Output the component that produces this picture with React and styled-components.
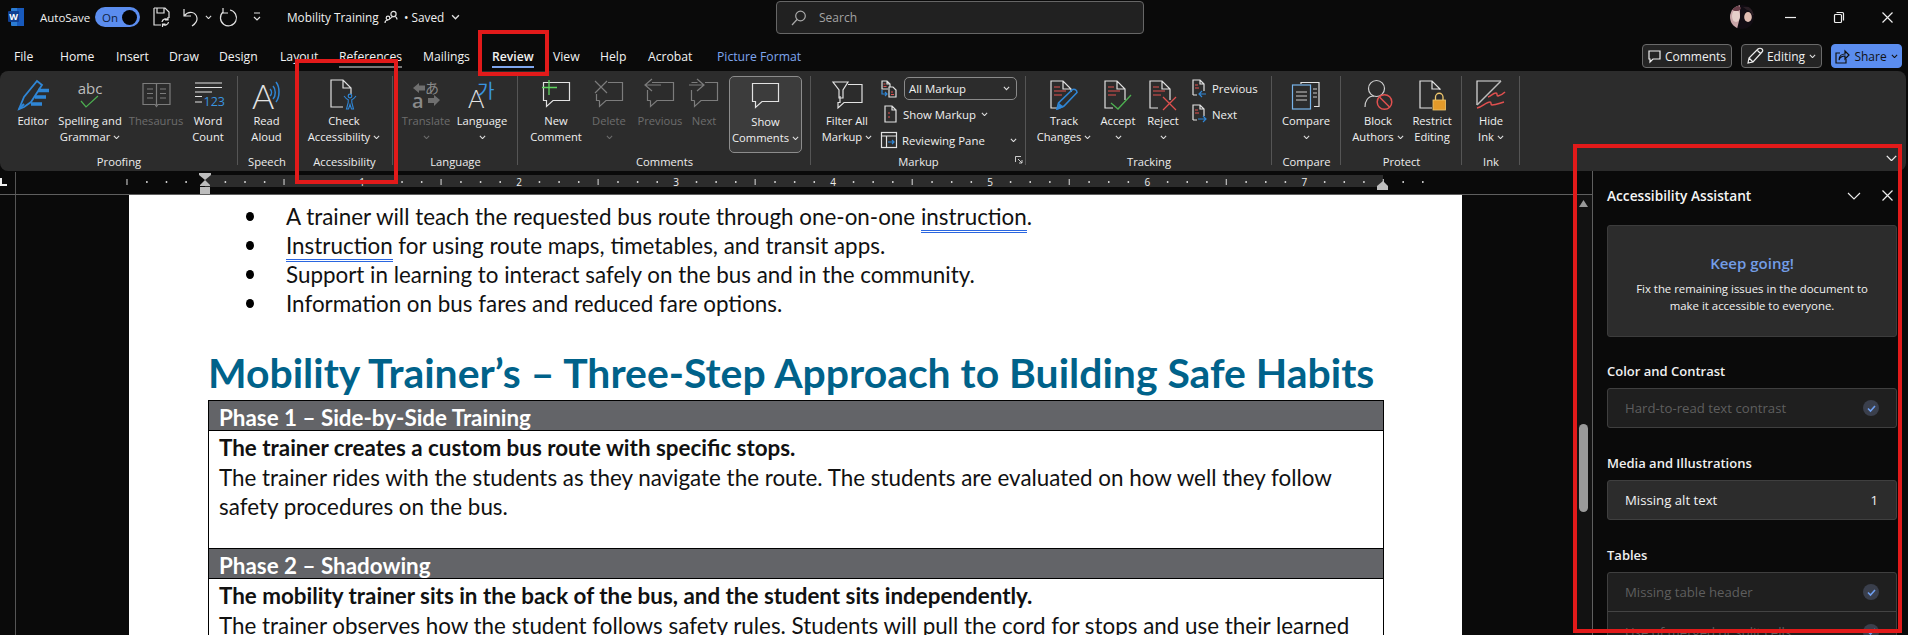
import React from 'react';
import styled, { createGlobalStyle } from 'styled-components';

const Global = createGlobalStyle`
  html, body { margin: 0; padding: 0; background: #0a0a0a; }
  * { box-sizing: border-box; }
`;
const UI = `"Open Sans", "Noto Sans", sans-serif`;
const DOC = `Lato, "Liberation Sans", sans-serif`;

const Screen = styled.div`
  position: relative; width: 1908px; height: 635px; overflow: hidden;
  background: #0a0a0a; color: #f0f0f0; font-family: ${UI};
  display: flex; flex-direction: column;
`;
const Callout = styled.div`
  position: absolute; left: ${p => p.$x}px; top: ${p => p.$y}px; width: ${p => p.$w}px; height: ${p => p.$h}px;
  border: 4px solid #e21a1a; pointer-events: none; z-index: 5;
`;

/* title bar */
const TitleBar = styled.header`
  height: 40px; display: grid; grid-template-columns: 776px 368px 1fr; align-items: start; flex: none;
`;
const QuickAccess = styled.div`display: flex; align-items: center; height: 34px; font-size: 12px; padding-left: 8px;`;
const AutoSave = styled.span`margin-left: 16px; width: 55px; font-size: 11.5px;`;
const Toggle = styled.span`
  width: 45px; height: 20px; border-radius: 10px; background: #5b8def; display: flex; align-items: center;
  justify-content: space-between; padding: 0 3px 0 7px; font-size: 11.5px; color: #10233f;
  &::after { content: ''; width: 15px; height: 15px; border-radius: 50%; background: #050505; }
`;
const DocTitle = styled.span`margin-left: 26px; width: 97px; font-size: 11.8px; white-space: nowrap;`;
const Saved = styled.span`margin-left: 6px; font-size: 11.8px; display: flex; align-items: center; gap: 7px;`;
const Tool = styled.span`display: inline-flex; margin-left: ${p => p.$ml || 0}px;`;
const SearchBox = styled.div`
  height: 33px; margin-top: 1px; background: #212121; border: 1px solid #666; border-radius: 4px;
  display: flex; align-items: center; padding-left: 14px; gap: 13px; color: #a3a3a3; font-size: 12px;
`;
const WindowControls = styled.div`
  display: flex; align-items: center; justify-content: flex-end; height: 34px; padding-right: 15px; gap: 38px;
`;
const AvatarSlot = styled.span`display: flex; margin-right: -7px;`;

/* tabs */
const TabRow = styled.nav`height: 31px; display: flex; align-items: flex-start; padding-left: 14px; flex: none; position: relative;`;
const Tab = styled.span`
  width: ${p => p.$w}px; flex: none; font-size: 12.2px; line-height: 17px; padding-top: 8px; white-space: nowrap;
  color: ${p => p.$accent ? '#7ea6ee' : '#f2f2f2'}; font-weight: ${p => p.$active ? 600 : 400};
`;
const TabText = styled.span`
  display: inline-block; padding-bottom: 1px;
  border-bottom: 2px solid ${p => p.$line || 'transparent'};
`;
const Actions = styled.div`position: absolute; right: 6px; top: 4px; display: flex; gap: 9px;`;
const ActionBtn = styled.div`
  height: 24px; width: ${p => p.$w}px; border: 1px solid ${p => p.$blue ? '#5b8def' : '#6a6a6a'}; border-radius: 4px;
  background: ${p => p.$blue ? '#5b8def' : '#242424'}; color: ${p => p.$blue ? '#111' : '#f0f0f0'};
  display: flex; align-items: center; justify-content: center; gap: 4px; font-size: 12px;
`;

/* ribbon */
const Ribbon = styled.section`
  height: 100px; margin-right: 2px; background: #2c2c2c; border-radius: 8px; display: flex; flex: none; position: relative;
`;
const Group = styled.div`
  width: ${p => p.$w}px; flex: none; display: flex; flex-direction: column; padding-top: 5px; position: relative;
  &::after { content: ''; position: absolute; right: 0; top: 5px; bottom: 6px; width: 1px; background: #555; }
`;
const GroupBody = styled.div`height: 77px; display: flex; padding-left: ${p => p.$pl || 0}px;`;
const GroupLabel = styled.div`
  height: 16px; font-size: 11.2px; line-height: 16px; color: #ececec; text-align: ${p => p.$align || 'center'};
  padding-left: ${p => p.$pl || 0}px; padding-top: 1px; position: relative;
`;
const Launcher = styled.span`position: absolute; right: 3px; top: 3px; display: flex;`;
const Command = styled.div`
  width: ${p => p.$w}px; flex: none; display: flex; flex-direction: column; align-items: center;
  font-size: 11.2px; line-height: 16px; white-space: nowrap; color: ${p => p.$off ? '#6c6c6c' : '#f0f0f0'};
  margin-left: ${p => p.$ml || 0}px;
  ${p => p.$active && `background: #3c3c3c; border: 1px solid #8c8c8c; border-radius: 5px;`}
`;
const IconSlot = styled.div`height: 37px; display: flex; align-items: center; justify-content: center; flex: none;`;
const LabelLine = styled.div`height: 16px; display: flex; align-items: center; gap: 3px;`;
const SmallStack = styled.div`display: flex; flex-direction: column; margin-left: ${p => p.$ml || 0}px; width: ${p => p.$w}px; font-size: 11.4px; color: #f0f0f0;`;
const SmallRow = styled.div`height: ${p => p.$h || 26}px; display: flex; align-items: center; gap: 5px; white-space: nowrap;`;
const Select = styled.div`
  width: 117px; height: 23px; border: 1px solid #8a8a8a; border-radius: 5px; display: flex; align-items: center;
  justify-content: space-between; padding: 0 6px 0 4px; margin-left: 2px;
`;
const Grow = styled.span`flex: 1;`;
const RibbonCollapse = styled.span`position: absolute; right: 9px; bottom: 10px; display: flex;`;

/* work area */
const Work = styled.main`flex: 1; display: flex; min-height: 0;`;
const DocColumn = styled.div`width: 1593px; flex: none; display: flex; flex-direction: column; border-right: 1px solid #5f5f5f;`;
const RulerRow = styled.div`height: 24px; flex: none; border-bottom: 1px solid #5f5f5f;`;
const DocRow = styled.div`flex: 1; display: flex; min-height: 0;`;
const Gutter = styled.div`width: 129px; flex: none; position: relative; &::before { content: ''; position: absolute; left: 15px; top: 0; bottom: 0; width: 1px; background: #555; }`;
const Page = styled.article`
  width: 1333px; flex: none; background: #fff; color: #111; font-family: ${DOC}; font-size: 22.4px; overflow: hidden; padding-top: 7px;
`;
const Bullets = styled.ul`margin: 0; padding: 0 0 0 157px; list-style: none;`;
const Bullet = styled.li`
  height: 29px; line-height: 29px; white-space: nowrap; position: relative;
  &::before { content: ''; position: absolute; left: -40px; top: 10px; width: 8px; height: 9px; border-radius: 50%; background: #000; }
`;
const Squiggle = styled.span`border-bottom: 3px double #2a66e0; line-height: 1;`;
const Heading = styled.h1`
  margin: 32px 0 4px 79px; font-size: 40.9px; line-height: 46px; font-weight: 700; color: #00628a; white-space: nowrap; letter-spacing: 0;
`;
const PhaseTable = styled.div`margin-left: 79px; width: 1176px; border: 1px solid #000; border-bottom: 0;`;
const PhaseHead = styled.div`
  height: 30px; background: #636468; color: #fff; font-weight: 700; line-height: 33px; padding-left: 10px;
  border-bottom: 1px solid #000; white-space: nowrap;
`;
const PhaseBody = styled.div`
  height: ${p => p.$h}px; padding: 2px 10px 0; line-height: 29.5px; border-bottom: 1px solid #000;
`;
const Strong = styled.div`font-weight: 700;`;
const RightMargin = styled.div`width: 113px; flex: none;`;
const ScrollTrack = styled.div`width: 17px; flex: none; background: #121212; display: flex; flex-direction: column; align-items: center; padding-top: 5px;`;
const Thumb = styled.div`width: 9px; height: 88px; margin-top: 217px; border-radius: 5px; background: #9a9a9a;`;

/* pane */
const Pane = styled.aside`flex: 1; padding: 0 11px 0 14px; display: flex; flex-direction: column; min-width: 0;`;
const PaneHead = styled.div`height: 54px; flex: none; display: flex; align-items: center; padding-bottom: 5px;`;
const PaneTitle = styled.div`font-size: 13.7px; font-weight: 600; flex: 1; color: #f6f6f6;`;
const PaneIcons = styled.div`display: flex; align-items: center; gap: 21px; padding-right: 4px;`;
const Card = styled.div`
  height: 112px; background: #2c2c2c; border: 1px solid #3c3c3c; border-radius: 3px; text-align: center; padding-top: 26px; flex: none;
`;
const CardTitle = styled.div`color: #739de6; font-size: 15px; font-weight: 600; line-height: 22px; margin-bottom: 6px;`;
const CardText = styled.div`font-size: 11.4px; line-height: 17px; color: #f2f2f2;`;
const SectionTitle = styled.div`flex: none; font-size: 13px; font-weight: 600; line-height: 18px; margin: ${p => p.$mt || 26}px 0 8px; color: #f0f0f0;`;
const RowList = styled.div`border: 1px solid #3f3f3f; border-radius: 3px; background: ${p => p.$bg || '#2c2c2c'}; flex: none;`;
const PaneRow = styled.div`
  height: 38px; display: flex; align-items: center; justify-content: space-between; padding: 0 17px;
  font-size: 13.2px; color: ${p => p.$off ? '#5e5e5e' : '#f2f2f2'};
  & + & { border-top: 1px solid #444; height: 40px; }
`;
const Check = styled.span`
  width: 16px; height: 16px; border-radius: 50%; background: #3a3f4c; display: flex; align-items: center; justify-content: center;
`;
const Count = styled.span`padding-right: 1px;`;

/* drawings */
const W = '#e2e2e2', R = '#e0504f', B = '#2f86d6', G = '#4caf50', D = '#7c7c7c';
const Svg = ({ w = 30, h = 32, children }) => (
  <svg width={w} height={h} viewBox={`0 0 ${w} ${h}`} fill="none" strokeWidth="1.2" overflow="visible" style={{ flex: 'none', display: 'block' }}>{children}</svg>
);
const Chev = ({ c = '#e0e0e0', w = 7 }) => (
  <svg width={w} height={w * 0.7} viewBox="0 0 7 5" fill="none" style={{ flex: 'none' }}><path d="M.8 1l2.700 2.700L6.200 1" stroke={c} strokeWidth="1.100" /></svg>
);
const BigChev = ({ c = '#eee', w = 14, s = 1.1 }) => (
  <svg width={w} height={w / 2 + 1} viewBox="0 0 14 8" fill="none" style={{ flex: 'none' }}><path d="M1 1l6 6 6-6" stroke={c} strokeWidth={s} /></svg>
);
const DOC_OPEN = 'M21 20V9l-8-8H1v27h8M13 1v8h8';
const RedLines = () => <path d="M4 7h6M4 11h12M4 15h8" stroke={R} strokeWidth="1.200" />;
const BUBBLE = 'M4.500 19.500h-3v-18h26v18H11l-6.500 6z';
const SmallRed = () => <path d="M3 6h3M3 9h4" stroke={R} />;

const WordLogo = () => (
  <svg width="16" height="20" viewBox="0 0 16 20">
    <rect x="3" y="1" width="13" height="18" rx="1" fill="#2b7cd3" /><rect x="9" y="1" width="7" height="18" fill="#185abd" />
    <rect x="0" y="4" width="11" height="11" rx="1" fill="#103f91" />
    <text x="5.500" y="13" textAnchor="middle" fontSize="9" fontWeight="700" fill="#fff" fontFamily="Open Sans">W</text>
  </svg>
);
const SaveIcon = () => (
  <Svg w={17} h={20}>
    <path d="M1 1h11l4 4v6M1 1v17h7M4 1v5h7V1" stroke={W} />
    <path d="M9 15a3.500 3.500 0 0 1 6-2M15.500 15a3.500 3.500 0 0 1-6 2M15 10v3h-3M9.500 20v-3h3" stroke={W} />
  </Svg>
);
const Undo = () => <Svg w={17} h={20}><path d="M2 2v7h7M2 9c5-6 12-4 13 2 .6 4-2 6-5 8" stroke={W} /></Svg>;
const Redo = () => <Svg w={18} h={20}><path d="M11 3a8 8 0 1 1-7 2M4 1v5h5" stroke={W} /></Svg>;
const Custom = () => <Svg w={8} h={10}><path d="M1 1h6M1 5l3 3 3-3" stroke={W} /></Svg>;
const People = () => <Svg w={14} h={14}><circle cx="9.500" cy="4" r="2.600" stroke={W} /><circle cx="4" cy="8" r="1.800" stroke={W} /><path d="M1 13c0-2 1-3 3-3M6 9c1-2 3-2.500 4-2.500 2 0 3 1.500 3 3" stroke={W} /></Svg>;
const Avatar = () => (
  <svg width="24" height="24" viewBox="0 0 24 24" style={{ display: 'block' }}>
    <defs><clipPath id="av"><circle cx="12" cy="12" r="12" /></clipPath></defs>
    <g clipPath="url(#av)">
      <rect width="24" height="24" fill="#120d14" />
      <path d="M0 0h10v12L7 24H0z" fill="#c9a6a8" />
      <ellipse cx="6" cy="11" rx="4" ry="6" fill="#e6cfca" />
      <path d="M2 3c3-3 7-3 9 0-1 3-3 3-5 3S3 6 2 3z" fill="#6a3f4a" />
      <ellipse cx="18" cy="12" rx="3.800" ry="5" fill="#e0bdb2" />
      <path d="M13 2h8l3 8-2 0c-1-3-3-5-5-5z" fill="#2a1e24" />
    </g>
  </svg>
);
const Ruler = () => {
  const ticks = [];
  for (let i = -4; i <= 62; i++) {
    const x = 205 + i * 19.63;
    if (i % 8 === 0 && i > 0) ticks.push(<text key={i} x={x} y="15" fontSize="10" textAnchor="middle" fill="#eee" fontFamily="Open Sans">{i / 8}</text>);
    else if (i % 4 === 0 && i !== 0) ticks.push(<rect key={i} x={x} y="8" width="1" height="6" fill="#ddd" />);
    else if (i !== 0) ticks.push(<rect key={i} x={x} y="10" width="1.500" height="2" fill="#ccc" />);
  }
  return (
    <svg width="1592" height="23" viewBox="0 0 1592 23" style={{ display: 'block' }}>
      <rect x="205" y="4" width="1178" height="12" fill="#2c2c2c" />
      <rect x="15" y="1" width="1" height="22" fill="#555" />
      <path d="M1 7v7h6" stroke="#eee" strokeWidth="2" fill="none" />
      {ticks}
      <path d="M199 2h12v2l-6 5-6-5z" fill="#bdbdbd" /><path d="M205 9l5 5v1h-10v-1z" fill="#bdbdbd" /><rect x="200" y="16" width="10" height="7" fill="#bdbdbd" />
      <path d="M1383 10l5 5v4h-11v-4z" fill="#bdbdbd" />
    </svg>
  );
};

const I = {
  Editor: () => <Svg w={31} h={30}><path d="M1 29l5-12L19 1l5 4-11 17-7 5z" stroke={B} strokeWidth="1.800" /><path d="M1 29l5-5" stroke={B} strokeWidth="2" /><path d="M20 10.500h11M17 17h11M13 24h11" stroke={B} strokeWidth="3.600" /></Svg>,
  Spell: () => <Svg w={24} h={30}><text x="12" y="14" textAnchor="middle" fontSize="15" fill="#bdbdbd" fontFamily="Open Sans">abc</text><path d="M3 21l5 6L20 16" stroke={G} /></Svg>,
  Book: () => <Svg w={29} h={26}><path d="M1 1.500h13l.5 1 .5-1h13v21H16l-1.500 2-1.500-2H1zM14.500 3v20M5 7h6M5 11.500h6M5 16h6M18 7h6M18 11.500h6M18 16h6" stroke={D} /></Svg>,
  Count: () => <Svg w={29} h={25}><path d="M1 1h27M1 5.500h27M1 10h17M1 14.500h7M1 20h7" stroke={W} /><text x="9.500" y="24" fontSize="12.500" fill="#3a95e0" fontFamily="Open Sans">123</text></Svg>,
  Read: () => <Svg w={30} h={30}><text x="0" y="29" fontSize="34" fontWeight="300" fill={W} fontFamily="Lato">A</text><path d="M18 9c2 2 2 5 0 7M21 6c3 3 3 10 0 13M24 2c4 5 4 15 0 20" stroke={B} strokeWidth="1.500" /></Svg>,
  Check: () => <Svg w={28} h={32}>
    <path d="M21 15V9l-8-8H1v27h12M13 1v8h8" stroke={W} />
    <circle cx="20" cy="17" r="1.800" stroke={B} />
    <path d="M14 17c1.500 2 3 3.500 4.200 3.800v2.700l-1.700 6.500h2l1.500-4.500 1.500 4.500h2l-1.700-6.500v-2.700c1.200-.3 2.700-1.800 4.200-3.800" stroke={B} strokeWidth="1.100" />
  </Svg>,
  Translate: () => <Svg w={28} h={29}><text x="13" y="13" fontSize="14" fill="#8a8a8a" fontFamily="Noto Sans CJK JP">あ</text><text x="0" y="28" fontSize="20" fontWeight="600" fill="#8a8a8a" fontFamily="Open Sans">a</text><path d="M1 8l6-5v2.500h6v5H7V13zM28 20l-6 6v-3h-6v-5h6v-3z" fill="#6f6f6f" /></Svg>,
  Lang: () => <Svg w={28} h={29}><text x="0" y="28" fontSize="25" fontWeight="300" fill={W} fontFamily="Lato">A</text><text x="9" y="18" fontSize="19" fill="#3a95e0" fontFamily="Noto Sans CJK KR">가</text></Svg>,
  New: () => <Svg w={29} h={27}><path d={BUBBLE} stroke={W} /><path d="M7 -1v15M0 6.500h15" stroke="#5fd35f" strokeWidth="1.300" /></Svg>,
  Del: () => <Svg w={29} h={27}><path d="M4.500 19.500h-3V13M13 1.500h14.500v18H11l-6.500 6v-6" stroke={D} /><path d="M0 0l12 12M12 0L0 12" stroke={D} /></Svg>,
  Prev: () => <Svg w={29} h={27}><path d="M4.500 19.500h-3V9M6 1.500h21.500v18H11l-6.500 6v-6" stroke={D} /><path d="M6 -2l-7 6 7 6M-1 4h16" stroke={D} /></Svg>,
  Next: () => <Svg w={29} h={27}><path d="M4.500 19.500h-3V9M1.500 1.500h6M15 1.500h12.500v18H11l-6.500 6v-6" stroke={D} /><path d="M7 -2l7 6-7 6M-1 4h15" stroke={D} /></Svg>,
  Show: () => <Svg w={29} h={27}><path d={BUBBLE} stroke={W} /></Svg>,
  Filter: () => <Svg w={31} h={28}><path d="M16 3.500h14v18H12L6 27v-5.500h2V15" stroke={W} /><path d="M1 1h15l-5 8v8H7V9z" stroke={W} /></Svg>,
  Track: () => <Svg w={28} h={30}><path d="M21 12V9l-8-8H1v27h6M13 1v8h8" stroke={W} /><RedLines /><path d="M7 29l1.500-6L22 10c1.500-1.500 5-.5 5 2.500L14 26z" stroke={B} strokeWidth="1.600" /><path d="M7 30l2-7 5 4z" fill={B} /></Svg>,
  Accept: () => <Svg w={28} h={30}><path d={DOC_OPEN} stroke={W} /><RedLines /><path d="M7 23l7 6L27 15" stroke={G} strokeWidth="1.300" /></Svg>,
  Reject: () => <Svg w={28} h={30}><path d={DOC_OPEN} stroke={W} /><RedLines /><path d="M14 17l13 13M27 17L14 30" stroke={R} strokeWidth="1.300" /></Svg>,
  Compare: () => <Svg w={28} h={28}><path d="M9 3V1.500h18v24h-5" stroke={W} /><rect x=".5" y="4" width="18" height="24" stroke="#78b4ea" /><path d="M4 11h11M4 15h11M4 19h11M21 8h4M21 12h4M21 16h4" stroke="#c9c9c9" /></Svg>,
  Block: () => <Svg w={29} h={31}><circle cx="12.500" cy="9.500" r="8" stroke="#cfcfcf" /><path d="M1 28c0-6 3-11 9-11" stroke="#cfcfcf" /><circle cx="20.500" cy="23" r="7.300" stroke={R} strokeWidth="1.500" /><path d="M15.500 18l10 10" stroke={R} strokeWidth="1.500" /></Svg>,
  Restrict: () => <Svg w={27} h={30}><path d="M21 10V9l-8-8H1v27h12M13 1v8h8" stroke={W} /><rect x="14" y="20" width="12.500" height="10" fill="#e39a2a" stroke="#f0c86e" strokeWidth=".8" /><path d="M16.500 20v-3a3.700 3.700 0 0 1 7.500 0v3" stroke="#f0c86e" strokeWidth="1.300" /></Svg>,
  Ink: () => <Svg w={30} h={30}><path d="M1 25V1h24" stroke={W} /><path d="M1 25L25 1" stroke="#bdbdbd" strokeWidth="1.400" /><path d="M12 17c3-1 5-4 8-4 2 0 0 3 2 3 4-1 6-3 7-4M1 28c5-1 9-6 13-6 2 0 0 3 2 3 4 0 8-2 12-3" stroke={R} strokeWidth="1.500" /></Svg>,
  SmallPrev: () => <Svg w={15} h={20}><path d="M1 16V1h7l4 4v7M8 1v4h4M1 16h4" stroke={W} /><SmallRed /><path d="M14 15H7M10 12l-3 3 3 3" stroke={B} /></Svg>,
  SmallNext: () => <Svg w={15} h={20}><path d="M1 16V1h7l4 4v7M8 1v4h4M1 16h4" stroke={W} /><SmallRed /><path d="M6 15h8M11 12l3 3-3 3" stroke={B} /></Svg>,
  DisplayMarkup: () => <Svg w={16} h={18}><path d="M7 9H1V1h5l3 3v3M6 1v3h3" stroke={W} /><path d="M8 7h4l3 3v7H8z" stroke={W} fill="#2c2c2c" /><path d="M2.500 4h2M2.500 6.500h3M10 12h2M10 14.500h3" stroke={R} /><path d="M1 10v4h5M4 12l2 2-2 2" stroke={B} /></Svg>,
  ShowMarkup: () => <Svg w={13} h={18}><path d="M1 17V1h7l4 4v12zM8 1v4h4" stroke={W} /><path d="M4 8h2M4 12h2" stroke={R} /></Svg>,
  Pane: () => <Svg w={16} h={17}><rect x=".5" y=".5" width="15" height="15" stroke={W} /><path d="M.5 4h15M5.500 4v12" stroke={W} /><path d="M7 10h6M11 8l2 2-2 2" stroke={B} /></Svg>,
  Launch: () => <Svg w={8} h={8}><path d="M.5 6V.5H6M3 3l4 4M7 4v3H4" stroke="#ddd" strokeWidth=".9" /></Svg>,
  Search: () => <Svg w={15} h={16}><circle cx="9.500" cy="6" r="4.800" stroke="#a9a9a9" /><path d="M6 9.500L1 15" stroke="#a9a9a9" /></Svg>,
  Min: () => <Svg w={11} h={3}><path d="M0 1.500h11" stroke="#eee" /></Svg>,
  Restore: () => <Svg w={10} h={11}><rect x=".5" y="2.500" width="7" height="8" rx="1" stroke="#eee" /><path d="M2.500.5h6a1 1 0 0 1 1 1v7" stroke="#eee" /></Svg>,
  Close: () => <Svg w={11} h={11}><path d="M.5.5l10 10M10.500.5l-10 10" stroke="#eee" /></Svg>,
  Cmt: () => <Svg w={13} h={13}><path d="M1 1h11v8H5l-3 3V9H1z" stroke="#eee" /></Svg>,
  Pen: () => <Svg w={16} h={16}><path d="M1 15l1-5L11 1c1-1 3-1 4 0s1 2 0 3l-9 10zM2 10l4 4M10 2l4 4" stroke="#eee" /></Svg>,
  Share: () => <Svg w={15} h={15}><path d="M5 4H1v10h10v-4" stroke="#111" /><path d="M4 11c0-4 3-6 6-6V2l4 4-4 4V7c-3 0-5 1-6 4z" stroke="#111" /></Svg>,
  Tick: () => <Svg w={9} h={7}><path d="M1 3.500l2.500 2.500L8 1" stroke="#6f9ff0" strokeWidth="1.600" /></Svg>,
};

const Cmd = ({ w, icon, l1, l2, off, active, ml, chev }) => (
  <Command $w={w} $off={off} $active={active} $ml={ml}>
    <IconSlot>{icon}</IconSlot>
    <LabelLine>{l1}{chev === 1 && <Chev />}</LabelLine>
    <LabelLine>{l2}{chev === 2 && <Chev c={off ? '#6c6c6c' : '#e0e0e0'} />}</LabelLine>
  </Command>
);

const tabs = [
  ['File', 46], ['Home', 56], ['Insert', 53], ['Draw', 50], ['Design', 61], ['Layout', 59], ['References', 84],
  ['Mailings', 69], ['Review', 61], ['View', 47], ['Help', 48], ['Acrobat', 69], ['Picture Format', 90],
];

export default function App() {
  return (
    <Screen>
      <Global />
      <TitleBar>
        <QuickAccess>
          <WordLogo />
          <AutoSave>AutoSave</AutoSave>
          <Toggle>On</Toggle>
          <Tool $ml={13}><SaveIcon /></Tool>
          <Tool $ml={12}><Undo /></Tool>
          <Tool $ml={6}><Chev /></Tool>
          <Tool $ml={7}><Redo /></Tool>
          <Tool $ml={16}><Custom /></Tool>
          <DocTitle>Mobility Training</DocTitle>
          <People />
          <Saved>• Saved <Chev w={9} /></Saved>
        </QuickAccess>
        <SearchBox><I.Search />Search</SearchBox>
        <WindowControls>
          <AvatarSlot><Avatar /></AvatarSlot><I.Min /><I.Restore /><I.Close />
        </WindowControls>
      </TitleBar>
      <TabRow>
        {tabs.map(([t, w]) => (
          <Tab key={t} $w={w} $active={t === 'Review'} $accent={t === 'Picture Format'}>
            <TabText $line={t === 'Review' ? '#7ea6ee' : t === 'References' ? '#777' : undefined}>{t}</TabText>
          </Tab>
        ))}
        <Actions>
          <ActionBtn $w={90}><I.Cmt />Comments</ActionBtn>
          <ActionBtn $w={81}><I.Pen />Editing <Chev /></ActionBtn>
          <ActionBtn $w={71} $blue><I.Share />Share <Chev c="#111" /></ActionBtn>
        </Actions>
      </TabRow>
      <Ribbon>
        <Group $w={238}>
          <GroupBody $pl={8}>
            <Cmd w={50} icon={<I.Editor />} l1="Editor" />
            <Cmd w={64} icon={<I.Spell />} l1="Spelling and" l2="Grammar" chev={2} />
            <Cmd w={68} off icon={<I.Book />} l1="Thesaurus" />
            <Cmd w={36} icon={<I.Count />} l1="Word" l2="Count" />
          </GroupBody>
          <GroupLabel>Proofing</GroupLabel>
        </Group>
        <Group $w={58}>
          <GroupBody><Cmd w={57} icon={<I.Read />} l1="Read" l2="Aloud" /></GroupBody>
          <GroupLabel>Speech</GroupLabel>
        </Group>
        <Group $w={97}>
          <GroupBody><Cmd w={96} icon={<I.Check />} l1="Check" l2="Accessibility" chev={2} /></GroupBody>
          <GroupLabel>Accessibility</GroupLabel>
        </Group>
        <Group $w={125}>
          <GroupBody $pl={3}>
            <Cmd w={60} off icon={<I.Translate />} l1="Translate" l2="" chev={2} />
            <Cmd w={52} icon={<I.Lang />} l1="Language" l2="" chev={2} />
          </GroupBody>
          <GroupLabel>Language</GroupLabel>
        </Group>
        <Group $w={293}>
          <GroupBody $pl={8}>
            <Cmd w={60} icon={<I.New />} l1="New" l2="Comment" />
            <Cmd w={46} off icon={<I.Del />} l1="Delete" l2="" chev={2} />
            <Cmd w={56} off icon={<I.Prev />} l1="Previous" />
            <Cmd w={32} off icon={<I.Next />} l1="Next" />
            <Cmd w={73} ml={9} active icon={<I.Show />} l1="Show" l2="Comments" chev={2} />
          </GroupBody>
          <GroupLabel>Comments</GroupLabel>
        </Group>
        <Group $w={215}>
          <GroupBody $pl={4}>
            <Cmd w={64} icon={<I.Filter />} l1="Filter All" l2="Markup" chev={2} />
            <SmallStack $w={136} $ml={2}>
              <SmallRow $h={25}><I.DisplayMarkup /><Select>All Markup <Chev /></Select></SmallRow>
              <SmallRow><Tool $ml={3}><I.ShowMarkup /></Tool><Tool $ml={1}>Show Markup</Tool><Chev /></SmallRow>
              <SmallRow><I.Pane />Reviewing Pane<Grow /><Tool $ml={0}><Chev /></Tool></SmallRow>
            </SmallStack>
          </GroupBody>
          <GroupLabel $pl={0}>Markup<Launcher><I.Launch /></Launcher></GroupLabel>
        </Group>
        <Group $w={246}>
          <GroupBody $pl={4}>
            <Cmd w={68} icon={<I.Track />} l1="Track" l2="Changes" chev={2} />
            <Cmd w={40} icon={<I.Accept />} l1="Accept" l2="" chev={2} />
            <Cmd w={50} icon={<I.Reject />} l1="Reject" l2="" chev={2} />
            <SmallStack $w={80} $ml={4}>
              <SmallRow $h={25}><I.SmallPrev />Previous</SmallRow>
              <SmallRow><I.SmallNext />Next</SmallRow>
            </SmallStack>
          </GroupBody>
          <GroupLabel>Tracking</GroupLabel>
        </Group>
        <Group $w={69}>
          <GroupBody><Cmd w={68} icon={<I.Compare />} l1="Compare" l2="" chev={2} /></GroupBody>
          <GroupLabel>Compare</GroupLabel>
        </Group>
        <Group $w={121}>
          <GroupBody $pl={5}>
            <Cmd w={64} icon={<I.Block />} l1="Block" l2="Authors" chev={2} />
            <Cmd w={44} icon={<I.Restrict />} l1="Restrict" l2="Editing" />
          </GroupBody>
          <GroupLabel>Protect</GroupLabel>
        </Group>
        <Group $w={58}>
          <GroupBody><Cmd w={58} icon={<I.Ink />} l1="Hide" l2="Ink" chev={2} /></GroupBody>
          <GroupLabel>Ink</GroupLabel>
        </Group>
        <RibbonCollapse><BigChev w={11} s={1.7} /></RibbonCollapse>
      </Ribbon>
      <Work>
        <DocColumn>
          <RulerRow><Ruler /></RulerRow>
          <DocRow>
            <Gutter />
            <Page>
              <Bullets>
                <Bullet>A trainer will teach the requested bus route through one-on-one <Squiggle>instruction</Squiggle>.</Bullet>
                <Bullet><Squiggle>Instruction</Squiggle> for using route maps, timetables, and transit apps.</Bullet>
                <Bullet>Support in learning to interact safely on the bus and in the community.</Bullet>
                <Bullet>Information on bus fares and reduced fare options.</Bullet>
              </Bullets>
              <Heading>Mobility Trainer’s – Three-Step Approach to Building Safe Habits</Heading>
              <PhaseTable>
                <PhaseHead>Phase 1 – Side-by-Side Training</PhaseHead>
                <PhaseBody $h={118}>
                  <Strong>The trainer creates a custom bus route with specific stops.</Strong>
                  The trainer rides with the students as they navigate the route. The students are evaluated on how well they follow safety procedures on the bus.
                </PhaseBody>
                <PhaseHead>Phase 2 – Shadowing</PhaseHead>
                <PhaseBody $h={119}>
                  <Strong>The mobility trainer sits in the back of the bus, and the student sits independently.</Strong>
                  The trainer observes how the student follows safety rules. Students will pull the cord for stops and use their learned
                </PhaseBody>
              </PhaseTable>
            </Page>
            <RightMargin />
            <ScrollTrack>
              <svg width="9" height="7" viewBox="0 0 9 7"><path d="M4.500 0L9 7H0z" fill="#999" /></svg>
              <Thumb />
            </ScrollTrack>
          </DocRow>
        </DocColumn>
        <Pane>
          <PaneHead>
            <PaneTitle>Accessibility Assistant</PaneTitle>
            <PaneIcons><BigChev /><I.Close /></PaneIcons>
          </PaneHead>
          <Card>
            <CardTitle>Keep going!</CardTitle>
            <CardText>Fix the remaining issues in the document to<br />make it accessible to everyone.</CardText>
          </Card>
          <SectionTitle $mt={25}>Color and Contrast</SectionTitle>
          <RowList $bg="#1f1f1f"><PaneRow $off>Hard-to-read text contrast<Check><I.Tick /></Check></PaneRow></RowList>
          <SectionTitle>Media and Illustrations</SectionTitle>
          <RowList><PaneRow>Missing alt text<Count>1</Count></PaneRow></RowList>
          <SectionTitle>Tables</SectionTitle>
          <RowList $bg="#1f1f1f">
            <PaneRow $off>Missing table header<Check><I.Tick /></Check></PaneRow>
            <PaneRow $off>Use of merged or split cells<Check><I.Tick /></Check></PaneRow>
          </RowList>
        </Pane>
      </Work>
      <Callout $x={478} $y={30} $w={71} $h={46} />
      <Callout $x={295} $y={59} $w={103} $h={125} />
      <Callout $x={1573} $y={144} $w={329} $h={489} />
    </Screen>
  );
}
